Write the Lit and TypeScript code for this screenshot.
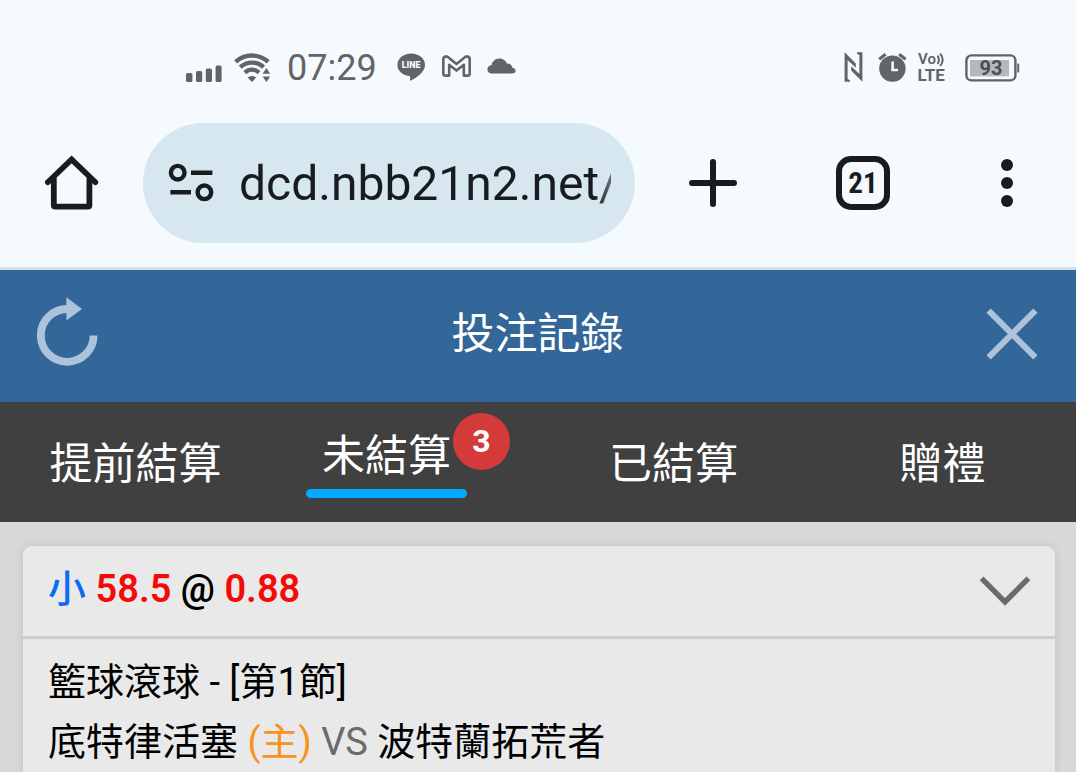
import { LitElement, html, css } from "lit";
import { customElement, state } from "lit/decorators.js";

interface Tab {
  id: string;
  label: string;
  count?: number;
}

const TABS: Tab[] = [
  { id: "early", label: "提前結算" },
  { id: "open", label: "未結算", count: 3 },
  { id: "settled", label: "已結算" },
  { id: "gift", label: "贈禮" },
];

const FONT = css`Roboto, "Noto Sans CJK TC", sans-serif`;

@customElement("status-bar")
class StatusBar extends LitElement {
  static styles = css`
    :host {
      display: flex;
      justify-content: space-between;
      align-items: center;
      height: 32px;
      padding: 52px 56px 39px 186px;
      font-family: ${FONT};
      color: #626466;
    }
    .group {
      display: flex;
      align-items: center;
      gap: 16px;
    }
    .radio {
      display: flex;
      align-items: center;
      gap: 12px;
    }
    .time {
      font-size: 36px;
      line-height: 32px;
      margin-right: 4px;
    }
    .system {
      gap: 14px;
    }
    .alarm {
      margin-right: -3px;
    }
    .power {
      margin-left: 4px;
    }
    svg {
      display: block;
      fill: currentColor;
    }
    text {
      font-family: ${FONT};
    }
  `;

  render() {
    return html`
      <div class="group">
        <div class="radio">
          <svg width="36" height="32" viewBox="0 0 36 32" aria-hidden="true">
            <rect x="0" y="21" width="6.4" height="9" rx="1.6" />
            <rect x="10" y="19" width="6.2" height="11" rx="1.6" />
            <rect x="19.8" y="16.6" width="6.2" height="13.4" rx="1.6" />
            <rect x="29.6" y="13.4" width="6" height="16.6" rx="1.6" />
          </svg>
          <svg width="37" height="32" viewBox="0 0 37 32" aria-hidden="true">
            <g fill="none" stroke="currentColor" stroke-width="4.3">
              <path d="M1.6 9.8C11 1.4 24.6 1.4 34.2 9.8" />
              <path d="M6.2 15.2C13 9 22.8 9 29.6 15.2" />
              <path d="M10.8 20.6C15 16.800 20.6 16.800 25 20.6" />
            </g>
            <path d="M13.6 25.6Q17.9 22.6 22.2 25.6L17.9 30Z" />
            <path d="M28.6 21.8 32.4 16 36.2 21.8ZM28.6 24.4H36.2L32.4 30Z" />
          </svg>
        </div>
        <span class="time">07:29</span>
        <svg width="29" height="32" viewBox="0 0 29 32" aria-hidden="true">
          <path d="M14.2 1.6C6.4 1.6.4 6.6.4 12.9c0 5.600 5 10.200 11.700 11.100 1 .2 1.200.6 1.100 1.500l-.3 2.500c0 .7.4.9 1 .6C18.600 25.900 28 20.400 28 12.900 28 6.600 22 1.600 14.200 1.600Z" />
          <text x="14.2" y="16.200" text-anchor="middle" font-size="9" font-weight="900" fill="#f5faff">LINE</text>
        </svg>
        <svg width="29" height="32" viewBox="0 0 29 32" aria-hidden="true">
          <path
            d="M1.300 7.200Q1.300 4.600 3.600 4.600H5.200L14.500 12 23.800 4.600H25.400Q27.700 4.600 27.700 7.200V21.400Q27.700 23.600 25.600 23.600H21.800V12.800L14.500 18.600 7.200 12.800V23.600H3.400Q1.300 23.600 1.300 21.400Z"
            fill="none"
            stroke="currentColor"
            stroke-width="2.6"
            stroke-linejoin="round"
          />
        </svg>
        <svg width="29" height="32" viewBox="0 0 29 32" aria-hidden="true">
          <path d="M5 21.400C2.300 21.400.4 19.800.4 17.400c0-2.300 1.700-4 4-4.100C5.200 9.200 8.400 6.400 12.400 6.400c3.600 0 6.400 2 7.500 5 3.200-.2 5.300 1.800 5.500 4.300 2 .3 3.200 1.500 3.200 3 0 1.600-1.300 2.700-3.200 2.700Z" />
        </svg>
      </div>
      <div class="group system">
        <svg width="20" height="32" viewBox="0 0 20 32" aria-hidden="true">
          <path d="M.6.2 11.800 11.400V15.800L3.600 8V27L6 28.200V29.800H.6ZM18.400 29.800 7.200 18.600V14.200L15.400 22V3L13 1.800V.2H18.400Z" />
        </svg>
        <svg class="alarm" width="29" height="32" viewBox="0 0 29 32" aria-hidden="true">
          <circle cx="14.400" cy="16.600" r="13.200" />
          <path d="M1.200 7.200 7.600 2.200M27.600 7.200 21.200 2.200" stroke="currentColor" stroke-width="3" />
          <path d="M14.600 9.600V18H20" fill="none" stroke="#f5faff" stroke-width="2.600" />
        </svg>
        <svg width="28" height="32" viewBox="0 0 28 32" aria-hidden="true">
          <text x="0" y="12" font-size="15" font-weight="600">Vo</text>
          <path d="M19.600 3.600Q22.200 7.600 19.600 12M22.200 1.600Q27.200 7.600 22.200 13.800" fill="none" stroke="currentColor" stroke-width="2" />
          <text x="-.6" y="29" font-size="17" font-weight="700">LTE</text>
        </svg>
        <svg class="power" width="56" height="32" viewBox="0 0 56 32" aria-hidden="true">
          <rect x="2.400" y="3.400" width="49" height="25" rx="5" fill="none" stroke="currentColor" stroke-width="2.400" />
          <rect x="6" y="8" width="39" height="16.400" fill="#b5b9bc" />
          <path d="M53.200 11.600H55.200V20.400H53.200Z" />
          <text x="27" y="23" text-anchor="middle" font-size="20" font-weight="700" fill="#4c4e50">93</text>
        </svg>
      </div>
    `;
  }
}

@customElement("browser-bar")
class BrowserBar extends LitElement {
  static styles = css`
    :host {
      display: flex;
      align-items: center;
      padding-bottom: 24px;
      border-bottom: 3px solid #d5e0ea;
      font-family: ${FONT};
      color: #191c1e;
    }
    button {
      display: flex;
      align-items: center;
      justify-content: center;
      flex: none;
      width: 150px;
      height: 120px;
      padding: 0;
      border: 0;
      background: none;
      color: inherit;
      font-family: inherit;
    }
    .home {
      width: 143px;
    }
    .more {
      width: 138px;
    }
    .address {
      display: flex;
      align-items: center;
      gap: 24px;
      flex: 1;
      min-width: 0;
      height: 120px;
      box-sizing: border-box;
      margin-right: 3px;
      padding: 0 24px;
      border-radius: 60px;
      background: #d7e7ef;
    }
    .address svg {
      flex: none;
    }
    .url {
      flex: 1;
      min-width: 0;
      height: 64px;
      padding: 0;
      border: 0;
      outline: 0;
      background: none;
      color: inherit;
      font-family: inherit;
      font-size: 48px;
      -webkit-mask-image: linear-gradient(to left, rgba(0, 0, 0, 0.6), #000 16px);
      mask-image: linear-gradient(to left, rgba(0, 0, 0, 0.6), #000 16px);
    }
    .count {
      display: flex;
      align-items: center;
      justify-content: center;
      width: 54px;
      height: 54px;
      box-sizing: border-box;
      border: 6px solid currentColor;
      border-radius: 15px;
      font-family: "Roboto Condensed", Roboto, sans-serif;
      font-size: 29px;
      font-weight: 700;
      line-height: 42px;
    }
  `;

  render() {
    return html`
      <button class="home" aria-label="首頁">
        <svg width="54" height="56" viewBox="0 0 54 56" fill="none" stroke="currentColor">
          <path d="M8.800 23V50Q8.800 51.600 10.400 51.600H42.800Q44.400 51.600 44.400 50V23" stroke-width="5.800" />
          <path d="M2.800 27.200 26.600 4.400 50.400 27.200" stroke-width="5.600" stroke-linecap="round" />
        </svg>
      </button>
      <div class="address">
        <svg width="48" height="40" viewBox="0 0 48 40" fill="none" stroke="currentColor" stroke-width="4.400" aria-hidden="true">
          <circle cx="10.700" cy="9.700" r="6.800" />
          <path d="M24 9.700H45.400M3.400 29.300H24" />
          <circle cx="37.400" cy="29.300" r="6.800" />
        </svg>
        <input class="url" type="text" aria-label="網址" .value=${"dcd.nbb21n2.net/"} />
      </div>
      <button aria-label="新分頁">
        <svg width="48" height="48" viewBox="0 0 48 48" stroke="currentColor" stroke-width="6" stroke-linecap="round">
          <path d="M24 3V45M3 24H45" />
        </svg>
      </button>
      <button aria-label="分頁"><span class="count">21</span></button>
      <button class="more" aria-label="更多">
        <svg width="12" height="48" viewBox="0 0 12 48" fill="currentColor">
          <circle cx="6" cy="6" r="6" />
          <circle cx="6" cy="24" r="6" />
          <circle cx="6" cy="42" r="6" />
        </svg>
      </button>
    `;
  }
}

@customElement("bet-card")
class BetCard extends LitElement {
  static styles = css`
    :host {
      display: block;
      flex: 1;
      border-radius: 9px 9px 0 0;
      background: #e9e9e9;
      box-shadow: 0 0 8px rgba(0, 0, 0, 0.12);
      font-family: ${FONT};
      font-size: 38px;
      color: #000;
    }
    .head {
      display: flex;
      align-items: center;
      justify-content: space-between;
      height: 90px;
      padding: 0 24px 0 25px;
      border-bottom: 3px solid #cccccc;
    }
    .pick {
      margin: 0;
      padding-bottom: 4px;
      font-size: 38px;
      line-height: 60px;
      font-weight: 500;
    }
    .odds {
      font-weight: 600;
    }
    .side {
      color: #0a6cf0;
    }
    .value {
      color: #f50a0a;
    }
    .toggle {
      display: block;
      padding: 0;
      border: 0;
      background: none;
      color: #6b6b6b;
    }
    .toggle svg {
      display: block;
    }
    .body {
      padding: 13px 25px 0;
      line-height: 60px;
    }
    .body p {
      margin: 0;
    }
    .home {
      color: #f7931e;
    }
    .versus {
      color: #6b6b6b;
    }
  `;

  render() {
    return html`
      <header class="head">
        <h2 class="pick">
          <span class="side">小</span>
          <span class="odds"><span class="value">58.5</span> @ <span class="value">0.88</span></span>
        </h2>
        <button class="toggle" aria-label="展開">
          <svg width="52" height="32" viewBox="0 0 52 32" fill="none" stroke="currentColor" stroke-width="5.400">
            <path d="M2.600 3.400 26 27 49.400 3.400" />
          </svg>
        </button>
      </header>
      <div class="body">
        <p>籃球滾球 - [第1節]</p>
        <p>底特律活塞 <span class="home">(主)</span> <span class="versus">VS</span> 波特蘭拓荒者</p>
      </div>
    `;
  }
}

@customElement("app-root")
class AppRoot extends LitElement {
  static styles = css`
    :host {
      display: flex;
      flex-direction: column;
      min-height: 100vh;
      background: #f5faff;
      font-family: ${FONT};
    }
    button {
      padding: 0;
      border: 0;
      background: none;
      color: inherit;
      font: inherit;
    }
    .title-bar {
      display: flex;
      align-items: center;
      justify-content: space-between;
      height: 128px;
      padding: 0 38px 4px 37px;
      background: #336699;
      color: #fff;
    }
    .title {
      margin: 0;
      font-size: 43px;
      line-height: 64px;
      font-weight: 400;
    }
    .action {
      display: flex;
      flex: none;
      width: 61px;
      color: #adc3dc;
    }
    .close {
      justify-content: flex-end;
    }
    .tabs {
      display: grid;
      grid-template-columns: repeat(4, 1fr);
      height: 120px;
      background: #404040;
      color: #fff;
      font-size: 43px;
      line-height: 64px;
    }
    .tab {
      display: flex;
      align-items: center;
      justify-content: center;
      padding: 4px 0 0 2px;
    }
    .current {
      position: relative;
      margin-right: 36px;
      padding: 0 16px 16px;
    }
    .current::after {
      content: "";
      position: absolute;
      left: 0;
      right: 0;
      bottom: 6px;
      height: 9px;
      border-radius: 5px;
      background: #00aaff;
    }
    .badge {
      position: absolute;
      top: -11px;
      right: -43px;
      width: 57px;
      height: 57px;
      border-radius: 50%;
      background: #d43a3a;
      font-size: 32px;
      line-height: 57px;
      font-weight: 700;
      text-align: center;
    }
    .records {
      display: flex;
      flex-direction: column;
      flex: 1;
      padding: 24px 21px 0 23px;
      background: #d8d8d8;
    }
  `;

  @state() private active = "open";

  private renderLabel(tab: Tab) {
    if (tab.id !== this.active) return html`<span>${tab.label}</span>`;
    return html`<span class="current"
      >${tab.label}${tab.count ? html`<span class="badge">${tab.count}</span>` : ""}</span
    >`;
  }

  render() {
    return html`
      <status-bar></status-bar>
      <browser-bar></browser-bar>
      <header class="title-bar">
        <button class="action" aria-label="重新整理">
          <svg width="61" height="76" viewBox="0 -3 61 76">
            <path d="M56.600 36.400A26.400 26.400 0 1 1 30.200 10H32" fill="none" stroke="currentColor" stroke-width="7.800" />
            <path d="M29.400 -1.800 45 10 29.400 21.600Z" fill="currentColor" />
          </svg>
        </button>
        <h1 class="title">投注記錄</h1>
        <button class="action close" aria-label="關閉">
          <svg width="52" height="52" viewBox="0 0 52 52" stroke="currentColor" stroke-width="6">
            <path d="M2.600 2.600 49.400 49.400M49.400 2.600 2.600 49.400" />
          </svg>
        </button>
      </header>
      <nav class="tabs">
        ${TABS.map(
          (tab) => html`<button class="tab" @click=${() => (this.active = tab.id)}>${this.renderLabel(tab)}</button>`
        )}
      </nav>
      <main class="records"><bet-card></bet-card></main>
    `;
  }
}
